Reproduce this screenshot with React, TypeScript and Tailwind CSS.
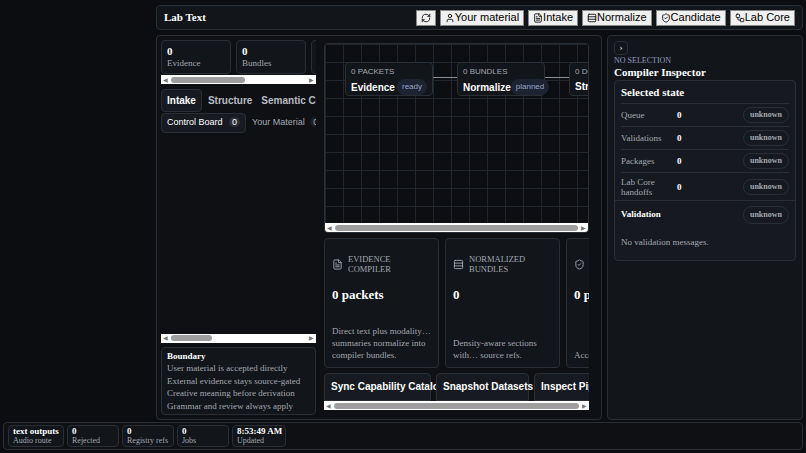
import { RefreshCw, User, FileText, Rows3, ShieldCheck, Workflow } from 'lucide-react';

const serif = { fontFamily: '"Liberation Serif", serif' };
const sans = { fontFamily: '"Liberation Sans", sans-serif' };

function TopButton({ icon, label }: { icon: React.ReactNode; label?: string }) {
  return (
    <button className="flex items-center h-[16px] px-[4px] bg-[#f0f0f0] border border-[#888] text-black text-[11px] leading-none whitespace-nowrap" style={sans}>
      {icon}
      {label}
    </button>
  );
}

function Scrollbar({ thumb }: { thumb: string }) {
  return (
    <div className="h-[9px] bg-white flex items-center px-[2px] gap-[3px] shrink-0">
      <span className="text-[6px] text-[#777] leading-none">◀</span>
      <div className="flex-1 h-[6px]">
        <div className="h-full bg-[#9e9e9e] rounded-full" style={{ width: thumb }} />
      </div>
      <span className="text-[6px] text-[#777] leading-none">▶</span>
    </div>
  );
}

function Stat({ value, label }: { value: string; label: string }) {
  return (
    <div className="w-[70px] shrink-0 h-[34px] rounded border border-[#2a2f36] bg-[#12151a] px-[5px] pt-[4px]">
      <div className="text-[11px] font-bold text-white leading-[12px]">{value}</div>
      <div className="text-[9px] text-[#a3a8b0] leading-[12px]">{label}</div>
    </div>
  );
}

function Node({ top, title, badge }: { top: string; title: string; badge: string }) {
  return (
    <div className="shrink-0 w-[88px] h-[34px] rounded border border-[#2a2f36] bg-[#12151a] px-[5px] pt-[4px] whitespace-nowrap" style={sans}>
      <div className="text-[8px] text-[#a3a8b0] leading-[10px]">{top}</div>
      <div className="flex items-center justify-between mt-[2px]">
        <span className="text-[10px] font-bold text-white">{title}</span>
        {badge && <span className="text-[8px] text-[#9aa7c7] bg-[#1c2333] rounded-full px-[5px] py-[2px]">{badge}</span>}
      </div>
    </div>
  );
}

function Card({ icon, title, value, desc }: { icon: React.ReactNode; title: string; value: string; desc: string }) {
  return (
    <div className="shrink-0 w-[115px] h-[130px] rounded border border-[#2a2f36] bg-[#12151a] px-[7px] py-[6px] flex flex-col overflow-hidden">
      <div className="flex items-center gap-[5px] h-[30px] mt-[4px] text-[8.5px] text-[#a3a8b0] leading-[10px]">
        {icon}
        <span>{title}</span>
      </div>
      <div className="text-[13px] font-bold text-white mt-[6px] whitespace-nowrap">{value}</div>
      <div className="mt-auto text-[9px] text-[#a3a8b0] leading-[12px]">{desc}</div>
    </div>
  );
}

function Row({ label, value, tall }: { label: string; value: string; tall?: boolean }) {
  return (
    <div className={`flex items-center ${tall ? 'h-[28px]' : 'h-[23px]'} border-t border-[#2a2f36] text-[9px] text-[#a3a8b0] leading-[10px]`}>
      <div className="w-[56px]">{label}</div>
      <div className="font-bold text-white flex-1">{value}</div>
      <span className="rounded-full border border-[#2a2f36] px-[6px] py-[2px] text-[8px] font-bold text-[#a3a8b0]">unknown</span>
    </div>
  );
}

export default function App() {
  return (
    <div className="w-[806px] h-[453px] bg-[#0b0d10] flex flex-col text-white overflow-hidden" style={serif}>
      <div className="flex-1 flex pl-[156px] pr-[3px] pt-[5px] min-h-0">
        <div className="flex-1 flex flex-col gap-[5px] min-w-0">
          <div className="h-[25px] rounded border border-[#2a2f36] bg-[#12151a] flex items-center px-[7px]">
            <span className="text-[11px] font-bold">Lab Text</span>
            <div className="ml-auto flex gap-[4px]">
              <TopButton icon={<RefreshCw size={10} />} label="" />
              <TopButton icon={<User size={10} />} label="Your material" />
              <TopButton icon={<FileText size={10} />} label="Intake" />
              <TopButton icon={<Rows3 size={10} />} label="Normalize" />
              <TopButton icon={<ShieldCheck size={10} />} label="Candidate" />
              <TopButton icon={<Workflow size={10} />} label="Lab Core" />
            </div>
          </div>
          <div className="flex gap-[5px] h-[385px]">
            <div className="w-[446px] rounded border border-[#2a2f36] bg-[#0e1014] flex p-[4px] gap-[8px]">
              {/* left column */}
              <div className="w-[155px] flex flex-col">
                <div className="overflow-hidden w-[155px]">
                  <div className="flex gap-[5px] w-[240px] pb-[1px]">
                    <Stat value="0" label="Evidence" />
                    <Stat value="0" label="Bundles" />
                    <Stat value="0" label="Documents" />
                  </div>
                </div>
                <Scrollbar thumb="55%" />
                <div className="overflow-hidden w-[155px] mt-[5px]" style={sans}>
                  <div className="flex items-center text-[10px] font-bold text-[#b8bcc3] whitespace-nowrap">
                    <span className="border border-[#2a2f36] bg-[#171b21] rounded px-[5px] py-[3px] text-white">Intake</span>
                    <span className="px-[6px]">Structure</span>
                    <span className="px-[3px]">Semantic Cascade</span>
                  </div>
                  <div className="flex items-center gap-[6px] text-[9px] text-[#a3a8b0] whitespace-nowrap mt-[1px]">
                    <span className="border border-[#2a2f36] bg-[#171b21] rounded px-[5px] py-[2px] text-white">Control Board <span className="ml-[4px] bg-[#2a2f36] rounded-full px-[3px]">0</span></span>
                    <span>Your Material <span className="ml-[3px] bg-[#1c2028] rounded-full px-[3px]">0</span></span>
                    <span>Evidence</span>
                  </div>
                </div>
                <div className="flex-1" />
                <Scrollbar thumb="30%" />
                <div className="mt-[4px] w-[155px] rounded border border-[#2a2f36] bg-[#12151a] px-[5px] py-[2px] text-[9px] text-[#a3a8b0] leading-[12.5px] whitespace-nowrap">
                  <div className="font-bold text-white">Boundary</div>
                  <div>User material is accepted directly</div>
                  <div>External evidence stays source-gated</div>
                  <div>Creative meaning before derivation</div>
                  <div>Grammar and review always apply</div>
                </div>
              </div>
              {/* center */}
              <div className="w-[265px] flex flex-col pt-[3px]">
                <div className="h-[190px] rounded border border-[#2a2f36] overflow-hidden flex flex-col">
                  <div className="flex-1 overflow-hidden bg-[#0c0e12] pt-[18px] pl-[20px] flex items-start"
                    style={{ backgroundImage: 'linear-gradient(#22262d 1px, transparent 1px), linear-gradient(90deg, #22262d 1px, transparent 1px)', backgroundSize: '18px 18px' }}>
                    <Node top="0 PACKETS" title="Evidence" badge="ready" />
                    <div className="w-[24px] h-px bg-[#8a9099] mt-[15px] shrink-0" />
                    <Node top="0 BUNDLES" title="Normalize" badge="planned" />
                    <div className="w-[24px] h-px bg-[#8a9099] mt-[15px] shrink-0" />
                    <Node top="0 DOCUMENTS" title="Structure" badge="" />
                  </div>
                  <Scrollbar thumb="100%" />
                </div>
                <div className="mt-[5px] flex-1 overflow-hidden flex flex-col">
                  <div className="flex gap-[6px]">
                    <Card icon={<FileText size={11} className="shrink-0" />} title="EVIDENCE COMPILER" value="0 packets" desc="Direct text plus modality… summaries normalize into compiler bundles." />
                    <Card icon={<Rows3 size={11} className="shrink-0" />} title="NORMALIZED BUNDLES" value="0" desc="Density-aware sections with… source refs." />
                    <Card icon={<ShieldCheck size={11} className="shrink-0" />} title="" value="0 packets" desc="Accepted candidates only" />
                  </div>
                  <div className="flex gap-[5px] mt-[5px] text-[10px] font-bold whitespace-nowrap" style={sans}>
                    <div className="shrink-0 w-[107px] h-[28px] rounded-t border border-[#2a2f36] bg-[#171b21] px-[6px] pt-[5px]">Sync Capability Catalog</div>
                    <div className="shrink-0 w-[93px] h-[28px] rounded-t border border-[#2a2f36] bg-[#171b21] px-[6px] pt-[5px]">Snapshot Datasets</div>
                    <div className="shrink-0 w-[110px] h-[28px] rounded-t border border-[#2a2f36] bg-[#171b21] px-[6px] pt-[5px]">Inspect Pipeline</div>
                  </div>
                  <Scrollbar thumb="100%" />
                </div>
              </div>
            </div>
            {/* right */}
            <div className="flex-1 rounded border border-[#2a2f36] bg-[#12151a] px-[6px] pt-[5px]">
              <div className="w-[14px] h-[14px] border border-[#2a2f36] rounded-sm text-[9px] flex items-center justify-center">›</div>
              <div className="text-[8px] text-[#8f9bc0] leading-[10px] mt-[1px]">NO SELECTION</div>
              <div className="text-[11px] font-bold leading-[13px]">Compiler Inspector</div>
              <div className="rounded border border-[#2a2f36] bg-[#161a20] mt-[1px]">
                <div className="px-[6px]">
                  <div className="text-[11px] font-bold h-[22px] flex items-center">Selected state</div>
                  <Row label="Queue" value="0" />
                  <Row label="Validations" value="0" />
                  <Row label="Packages" value="0" />
                  <Row label="Lab Core handoffs" value="0" tall />
                </div>
                <div className="border-t border-[#2a2f36] px-[6px] pt-[5px] pb-[10px]">
                  <div className="flex items-center justify-between">
                    <span className="text-[9px] font-bold">Validation</span>
                    <span className="rounded-full border border-[#2a2f36] px-[6px] py-[2px] text-[8px] font-bold text-[#a3a8b0]">unknown</span>
                  </div>
                  <div className="text-[9px] text-[#a3a8b0] mt-[12px]">No validation messages.</div>
                </div>
              </div>
            </div>
          </div>
        </div>
      </div>
      <div className="h-[28px] mx-[3px] mb-[3px] rounded border border-[#2a2f36] bg-[#0e1014] flex items-center gap-[3px] px-[4px]">
        {[['text outputs', 'Audio route', 56], ['0', 'Rejected', 52], ['0', 'Registry refs', 52], ['0', 'Jobs', 52], ['8:53:49 AM', 'Updated', 54]].map(([v, l, w]) => (
          <div key={l as string} className="h-[22px] rounded border border-[#2a2f36] bg-[#12151a] px-[4px] leading-[10px] flex flex-col justify-center whitespace-nowrap" style={{ width: w as number }}>
            <div className="text-[9px] font-bold">{v}</div>
            <div className="text-[8px] text-[#a3a8b0]">{l}</div>
          </div>
        ))}
      </div>
    </div>
  );
}
